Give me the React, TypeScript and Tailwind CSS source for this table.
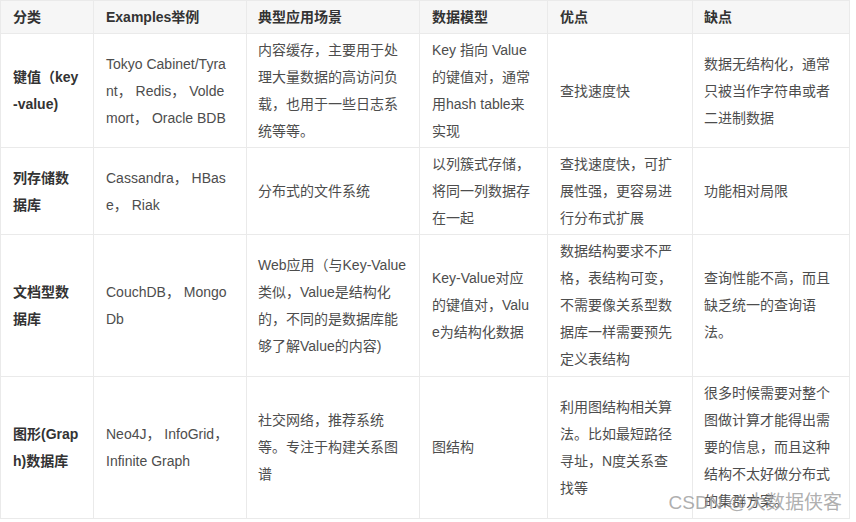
const headers = ["分类", "Examples举例", "典型应用场景", "数据模型", "优点", "缺点"];

const rows: string[][] = [
  [
    "键值（key-value)",
    "Tokyo Cabinet/Tyrant， Redis， Voldemort， Oracle BDB",
    "内容缓存，主要用于处理大量数据的高访问负载，也用于一些日志系统等等。",
    "Key 指向 Value的键值对，通常用hash table来实现",
    "查找速度快",
    "数据无结构化，通常只被当作字符串或者二进制数据",
  ],
  [
    "列存储数据库",
    "Cassandra， HBase， Riak",
    "分布式的文件系统",
    "以列簇式存储，将同一列数据存在一起",
    "查找速度快，可扩展性强，更容易进行分布式扩展",
    "功能相对局限",
  ],
  [
    "文档型数据库",
    "CouchDB， MongoDb",
    "Web应用（与Key-Value类似，Value是结构化的，不同的是数据库能够了解Value的内容)",
    "Key-Value对应的键值对，Value为结构化数据",
    "数据结构要求不严格，表结构可变，不需要像关系型数据库一样需要预先定义表结构",
    "查询性能不高，而且缺乏统一的查询语法。",
  ],
  [
    "图形(Graph)数据库",
    "Neo4J， InfoGrid， Infinite Graph",
    "社交网络，推荐系统等。专注于构建关系图谱",
    "图结构",
    "利用图结构相关算法。比如最短路径寻址，N度关系查找等",
    "很多时候需要对整个图做计算才能得出需要的信息，而且这种结构不太好做分布式的集群方案。",
  ],
];

const widths = ["w-[93px]", "w-[153px]", "w-[173px]", "w-[128px]", "w-[145px]", "w-[157px]"];
// per-column padding so the wraps land where the original ones do
const pads = ["pl-3 pr-3", "pl-3 pr-4", "pl-[11px] pr-[10px]", "pl-3 pr-3", "pl-3 pr-3", "pl-[11px] pr-3"];

export default function App() {
  return (
    <div className="relative w-[856px] h-[522px] bg-white overflow-hidden font-['Liberation_Sans','Noto_Sans_CJK_SC',sans-serif]">
      <table className="table-fixed border-collapse w-[850px] text-[14px] leading-[27px] text-[#4d4d4d]">
        <colgroup>
          {widths.map((w, i) => (
            <col key={i} className={w} />
          ))}
        </colgroup>
        <thead>
          <tr className="bg-[#f6f6f6]">
            {headers.map((h, i) => (
              <th
                key={h}
                className={
                  "border border-[#eaeaea] pt-[3px] pb-[2px] text-left font-bold text-[#333] " +
                  pads[i]
                }
              >
                {h}
              </th>
            ))}
          </tr>
        </thead>
        <tbody>
          {rows.map((row, r) => (
            <tr key={r}>
              {row.map((cell, c) => (
                <td
                  key={c}
                  className={
                    "border border-[#eaeaea] pt-[3px] align-middle break-all " +
                    (r >= 2 ? "pb-[3px] " : "pb-[2px] ") +
                    pads[c] +
                    (c === 0 ? " font-bold text-[#333]" : "")
                  }
                >
                  {cell}
                </td>
              ))}
            </tr>
          ))}
        </tbody>
      </table>
      <div className="absolute right-[14px] bottom-[8px] text-[19px] leading-[22px] text-[#9a9a9a]/80 whitespace-nowrap">
        CSDN @大数据侠客
      </div>
    </div>
  );
}
